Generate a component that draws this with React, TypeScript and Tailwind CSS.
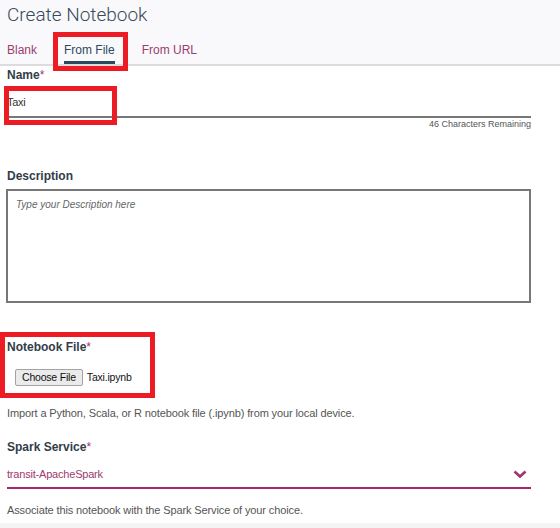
import React from "react";

function Label({ children }: { children: React.ReactNode }) {
  return (
    <div className="text-[12px] leading-[14px] font-bold text-[#323d49]">
      {children}
      <span className="text-[#a5356f] font-normal">*</span>
    </div>
  );
}

export default function App() {
  return (
    <div
      className="relative w-[560px] h-[528px] overflow-hidden bg-white"
      style={{ fontFamily: '"Liberation Sans", Arial, sans-serif' }}
    >
      <header className="h-[66px] bg-[#f9f9fb] border-b-2 border-[#dcdcdc] px-[7px] flex flex-col justify-between">
        <h1
          className="pt-[3px] text-[19px] leading-[24px] font-light text-[#3a4a5b]"
          style={{ fontFamily: 'Roboto, "Liberation Sans", sans-serif' }}
        >
          Create Notebook
        </h1>
        <nav className="flex gap-[27px]">
          <div className="text-[12px] leading-[14px] pb-[4px] border-b-[3px] border-transparent text-[#9b3c72]">
            Blank
          </div>
          <div className="text-[12px] leading-[14px] pb-[4px] border-b-[3px] border-[#2c4a5e] text-[#2c4a5e]">
            From File
          </div>
          <div className="text-[12px] leading-[14px] pb-[4px] border-b-[3px] border-transparent text-[#9b3c72]">
            From URL
          </div>
        </nav>
      </header>

      <main className="pl-[7px] pr-[29px]">
        <div className="mt-[2px]">
          <Label>Name</Label>
        </div>
        <div className="h-[36px] border-b-2 border-[#777777] pt-[13px] text-[11px] leading-[14px] tracking-[-0.3px] text-[#333]">
          Taxi
        </div>
        <div className="mt-[1px] text-right text-[9px] leading-[11px] text-[#555]">
          46 Characters Remaining
        </div>

        <div className="mt-[39px] text-[12px] leading-[14px] font-bold text-[#323d49]">
          Description
        </div>
        <div className="mt-[6px] -ml-px h-[114px] border-2 border-[#777777] px-[8px] pt-[8px]">
          <div className="italic text-[10px] leading-[12px] text-[#666]">
            Type your Description here
          </div>
        </div>

        <div className="mt-[37px]">
          <Label>Notebook File</Label>
        </div>
        <div className="mt-[15px] ml-[8px] flex items-center gap-[4px]">
          <button className="h-[17px] px-[6px] text-[10.5px] leading-[13px] tracking-[-0.2px] text-[#111] bg-[#ebebeb] border border-[#a3a3a3] rounded-[2px]">
            Choose File
          </button>
          <span className="text-[10.5px] leading-[13px] tracking-[-0.2px] text-[#111]">
            Taxi.ipynb
          </span>
        </div>
        <div className="mt-[21px] text-[11px] leading-[13px] tracking-[-0.12px] text-[#555]">
          Import a Python, Scala, or R notebook file (.ipynb) from your local device.
        </div>

        <div className="mt-[20px]">
          <Label>Spark Service</Label>
        </div>
        <div className="h-[35px] border-b-2 border-[#a6276e] pt-[14px] flex justify-between pr-[4px]">
          <span className="text-[11px] leading-[13px] tracking-[-0.2px] text-[#9e3a72]">
            transit-ApacheSpark
          </span>
          <svg width="14" height="9" viewBox="0 0 14 9" className="mt-[2px]">
            <path d="M1.5 1.5 L7 6.5 L12.5 1.5" fill="none" stroke="#a0306a" strokeWidth="2.5" />
          </svg>
        </div>
        <div className="mt-[15px] text-[11px] leading-[13px] tracking-[-0.12px] text-[#555]">
          Associate this notebook with the Spark Service of your choice.
        </div>
      </main>
      <div className="mt-[6px] h-[10px] bg-[#f4f4f4]" />

      {/* annotation boxes */}
      <div className="absolute left-[53px] top-[32px] w-[75px] h-[39px] border-[5px] border-[#ed1c24]" />
      <div className="absolute left-[4px] top-[86px] w-[113px] h-[39px] border-[5px] border-[#ed1c24]" />
      <div className="absolute left-0 top-[332px] w-[155px] h-[66px] border-[5px] border-[#ed1c24]" />
    </div>
  );
}
